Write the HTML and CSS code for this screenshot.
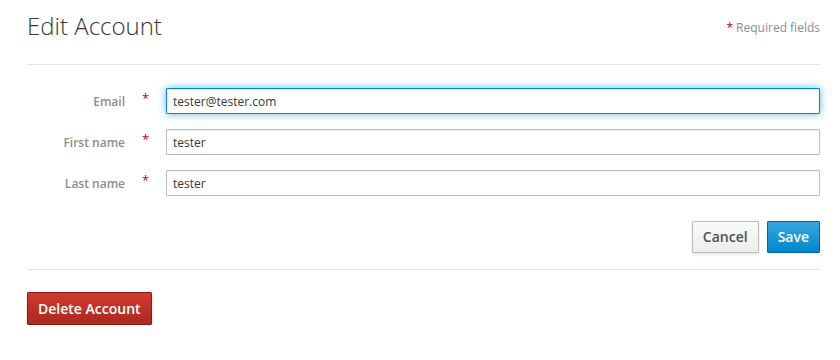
FILE: index.html
```html
<!DOCTYPE html>
<html>
<head>
<meta charset="utf-8">
<link rel="stylesheet" href="styles.css">
</head>
<body>
<div class="page">
  <div class="head">
    <h2 class="title">Edit Account</h2>
    <span class="req"><span class="star">*</span> Required fields</span>
  </div>
  <form class="form">
    <div class="row">
      <label class="label">Email</label>
      <span class="star">*</span>
      <input class="input focus" type="text" value="tester@tester.com">
    </div>
    <div class="row">
      <label class="label">First name</label>
      <span class="star">*</span>
      <input class="input" type="text" value="tester">
    </div>
    <div class="row">
      <label class="label">Last name</label>
      <span class="star">*</span>
      <input class="input" type="text" value="tester">
    </div>
    <div class="actions">
      <button type="button" class="btn btn-default">Cancel</button>
      <button type="button" class="btn btn-primary">Save</button>
    </div>
  </form>
  <div class="danger-zone">
    <button type="button" class="btn btn-danger">Delete Account</button>
  </div>
</div>
</body>
</html>
```
FILE: styles.css
```css
* { box-sizing: border-box; }
html, body { margin: 0; padding: 0; background: #fff; }
body { font-family: "Open Sans", "Noto Sans", sans-serif; color: #363636; font-size: 12px; }
.page { width: 840px; padding: 0 20px 0 27px; }
.head {
  display: flex; justify-content: space-between; align-items: flex-end;
  height: 65px; border-bottom: 1px solid #e4e4e4;
}
.title { margin: 0 0 25px 0; font-size: 24px; font-weight: 300; line-height: 26px; color: #363636; }
.req { font-size: 12px; color: #8b8d8f; margin-bottom: 28px; line-height: 16px; }
.star { color: #c00; }
.form { padding-top: 23px; border-bottom: 1px solid #e4e4e4; padding-bottom: 16px; }
.row { display: grid; grid-template-columns: 98px 41px 1fr; align-items: center; margin-bottom: 15px; }
.label { text-align: right; color: #8b8d8f; font-weight: 600; font-size: 12px; }
.row .star { text-align: center; font-size: 13px; align-self: start; margin-top: 1px; }
.input {
  height: 26px; border: 1px solid #bbb; border-radius: 1px; padding: 2px 6px;
  font: 12px "Open Sans", sans-serif; color: #363636; width: 100%; outline: none;
  box-shadow: inset 0 1px 1px rgba(3,3,3,0.05);
}
.input.focus { border-color: #0088ce; box-shadow: inset 0 1px 1px rgba(3,3,3,0.075), 0 0 8px rgba(0,136,206,0.6); }
.actions { display: flex; justify-content: flex-end; gap: 8px; margin-top: 25px; }
.btn {
  font: 600 14px/18px "Open Sans", sans-serif; padding: 6px 10px; border-radius: 1px;
  height: 32px; cursor: pointer;
}
.btn-default {
  color: #4d5258; background: linear-gradient(#fafafa, #ededed); border: 1px solid #bbb;
  box-shadow: 0 2px 3px rgba(3,3,3,0.1);
}
.btn-primary {
  color: #fff; background: linear-gradient(#39a5dc, #0088ce); border: 1px solid #00659c;
}
.danger-zone { padding-top: 22px; }
.btn-danger {
  color: #fff; background: linear-gradient(#d3382f, #a92a21); border: 1px solid #8b1a10;
  height: 33px; padding: 6px 10px; box-shadow: 0 2px 3px rgba(3,3,3,0.15);
}
```
